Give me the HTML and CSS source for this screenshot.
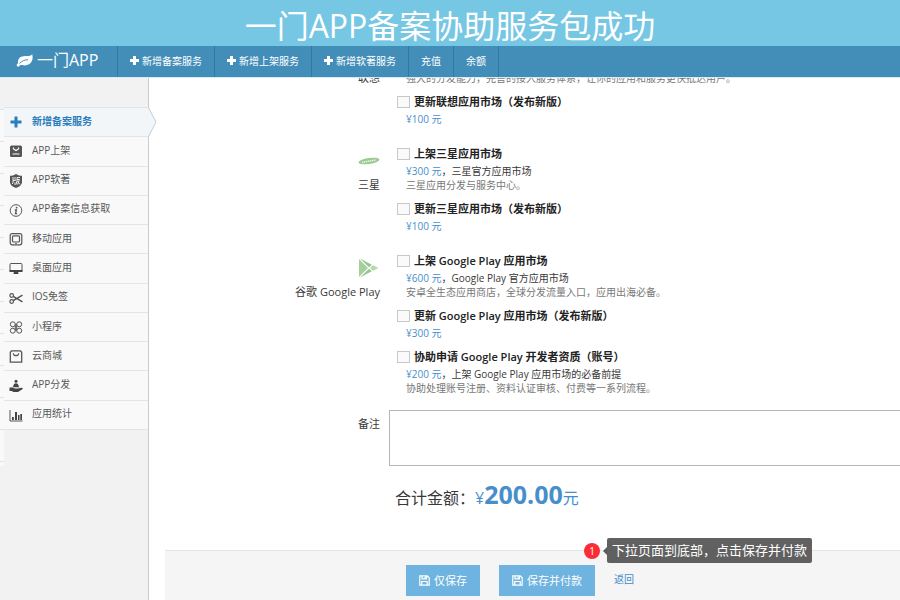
FILE: index.html
```html
<!DOCTYPE html>
<html lang="zh-CN">
<head>
<meta charset="utf-8">
<title>一门APP</title>
<link rel="stylesheet" href="styles.css">
</head>
<body>
<h1 class="banner">一门APP备案协助服务包成功</h1>
<header class="navbar">
  <a class="brand" href="#">
    <svg class="leaf" viewBox="0 0 17 13"><path fill="#fff" d="M16.2.3c.9 3.6.4 6.600-1.600 8.700-2.200 2.300-5.400 2.900-8.600 2.100-.9-.2-1.500-.3-2 .2-.5.600-1 1.400-1.700 1.400C1.400 12.700.5 11.700.6 11c.1-.8 1.300-1.300 1.500-2C1.600 6.300 2.700 4.300 4.700 3.100 7.900 1.200 13.900 3.200 16.200.3z"/><path fill="none" stroke="#438eb9" stroke-width="1" stroke-linecap="round" d="M3.800 9.200C6 6.900 8.300 5.900 11.700 5.700"/></svg>
    <span>一门APP</span>
  </a>
  <nav class="links">
    <a href="#"><svg class="plus" viewBox="0 0 9 9"><path d="M3 0h3v3h3v3H6v3H3V6H0V3h3z"/></svg>新增备案服务</a>
    <a href="#"><svg class="plus" viewBox="0 0 9 9"><path d="M3 0h3v3h3v3H6v3H3V6H0V3h3z"/></svg>新增上架服务</a>
    <a href="#"><svg class="plus" viewBox="0 0 9 9"><path d="M3 0h3v3h3v3H6v3H3V6H0V3h3z"/></svg>新增软著服务</a>
    <a href="#">充值</a>
    <a href="#">余额</a>
  </nav>
</header>
<div class="page">
  <aside class="sidebar">
    <ul class="menu">
      <li class="active"><a href="#"><svg viewBox="0 0 14 14"><path fill="#2b7dbc" d="M5.500 1.500h3v4h4v3h-4v4h-3v-4h-4v-3h4z"/></svg>新增备案服务</a>
        <svg class="arrow" viewBox="0 0 9 30"><path fill="#f2f6f9" d="M0 0 8 15 0 30z"/><path fill="none" stroke="#bccfda" d="M.5.5 8 15 .5 29.500"/></svg></li>
      <li><a href="#"><svg viewBox="0 0 14 14"><rect x="1" y="1.500" width="12" height="11.500" rx="1.500" fill="#555"/><path fill="none" stroke="#fff" stroke-width="1.200" d="M4.500 3.500v1.500L7 6.500 9.500 5V3.500M3.500 10h7"/></svg>APP上架</a></li>
      <li><a href="#"><svg viewBox="0 0 14 14"><path fill="#555" d="M7 0c2 1.300 4 1.800 6 1.800V8c0 3-3 5-6 6-3-1-6-3-6-6V1.800C3 1.800 5 1.300 7 0z"/><path fill="none" stroke="#fff" stroke-width=".9" d="M4 3v3.500h2.500M3 10l1-1V6.500M6 3v3.500M6 8.500V11M11 3.500H8V7L7 10.500M8 5.500h2.500L8.500 10.500M8.500 7l2.500 3.500"/></svg>APP软著</a></li>
      <li><a href="#"><svg viewBox="0 0 14 14"><circle cx="7" cy="7.500" r="5.800" fill="none" stroke="#555"/><circle cx="7.600" cy="4.700" r=".9" fill="#555"/><path fill="none" stroke="#555" stroke-width="1.300" d="M5.800 7h1.600l-.9 3.600h1.600"/></svg>APP备案信息获取</a></li>
      <li><a href="#"><svg viewBox="0 0 14 14" fill="none" stroke="#555" stroke-width="1.200"><rect x="1.200" y="1.600" width="11.600" height="11.200" rx="2"/><rect x="3.500" y="3.800" width="7" height="6.200" rx="1"/><path stroke-width=".8" d="M6 11.400h2"/></svg>移动应用</a></li>
      <li><a href="#"><svg viewBox="0 0 14 14"><rect x="1" y="2.500" width="12" height="8" rx="1" fill="none" stroke="#555"/><path fill="#444" d="M.5 9h13v2H9l.7 2H4.300L5 11H.5z"/></svg>桌面应用</a></li>
      <li><a href="#"><svg viewBox="0 0 14 14" fill="none" stroke="#555" stroke-width="1.200"><circle cx="2.700" cy="4.500" r="1.800"/><circle cx="2.700" cy="10.500" r="1.800"/><path stroke-width="1.500" d="M4.200 5.400 13.500 10.800M4.200 9.600 13.500 4.200"/></svg>IOS免签</a></li>
      <li><a href="#"><svg viewBox="0 0 14 14" fill="none" stroke="#555"><circle cx="3.800" cy="4.300" r="2.500"/><circle cx="10.200" cy="4.300" r="2.500"/><circle cx="3.800" cy="10.700" r="2.500"/><circle cx="10.200" cy="10.700" r="2.500"/><path d="M6.300 4.300v6.400M7.700 4.300v6.400"/></svg>小程序</a></li>
      <li><a href="#"><svg viewBox="0 0 14 14" fill="none" stroke="#555" stroke-width="1.300"><path d="M2.500 1.800h9l1.200 1.500v9.900H1.300V3.300zM4.300 4.300c.8 3.200 4.600 3.200 5.400 0"/></svg>云商城</a></li>
      <li><a href="#"><svg viewBox="0 0 14 14" fill="#444"><circle cx="7" cy="2.300" r="1.500"/><path d="M4.200 7.500c.2-4.500 5.400-4.500 5.600 0l1 .8H3.200zM.5 8.600h2.800l2.500 1h3l4-.8c1.200 0 1.300 1.200.2 1.700L9 13H4.500L2.700 12H.5z"/></svg>APP分发</a></li>
      <li><a href="#"><svg viewBox="0 0 14 14"><path fill="none" stroke="#555" d="M1 2v11h12.500"/><path fill="#444" d="M3 9h1.800v3H3zM6 4h2v8H6zM9 7h1.500v5H9zM11.300 6H13v6h-1.700z"/></svg>应用统计</a></li>
    </ul>
  </aside>
  <main class="main">
    <form class="form">
      <section class="group">
        <div class="market top">联想</div>
        <div class="items"><p class="desc">强大的分发能力，完善的接入服务体系，让你的应用和服务更快抵达用户。</p>
          <div class="item"><label><input type="checkbox">更新联想应用市场（发布新版）</label><p><b>¥100 元</b></p></div>
        </div>
      </section>
      <section class="group">
        <div class="market"><svg viewBox="0 0 22 20"><ellipse cx="11" cy="10" rx="10.600" ry="3" transform="rotate(-8 11 10)" fill="#9bcb92"/><path d="M4 11.400l14-2.500" stroke="#e8f4e5" stroke-width="1.500" stroke-dasharray="1.400 .6"/></svg>三星</div>
        <div class="items">
          <div class="item"><label><input type="checkbox">上架三星应用市场</label><p><b>¥300 元</b>，三星官方应用市场</p><p class="desc">三星应用分发与服务中心。</p></div>
          <div class="item"><label><input type="checkbox">更新三星应用市场（发布新版）</label><p><b>¥100 元</b></p></div>
        </div>
      </section>
      <section class="group">
        <div class="market"><svg viewBox="0 0 22 20"><path fill="#a5cf9c" d="M1 1v18l9-9z"/><path fill="#93c68a" d="M2 .5 11 9.300l2.800-2.600zM2 19.500l9-8.800 2.800 2.600z"/><path fill="#b4d9ac" d="M14.800 7.200 20.500 10l-5.700 2.800L12 10z"/></svg>谷歌 Google Play</div>
        <div class="items">
          <div class="item"><label><input type="checkbox">上架 Google Play 应用市场</label><p><b>¥600 元</b>，Google Play 官方应用市场</p><p class="desc">安卓全生态应用商店，全球分发流量入口，应用出海必备。</p></div>
          <div class="item"><label><input type="checkbox">更新 Google Play 应用市场（发布新版）</label><p><b>¥300 元</b></p></div>
          <div class="item"><label><input type="checkbox">协助申请 Google Play 开发者资质（账号）</label><p><b>¥200 元</b>，上架 Google Play 应用市场的必备前提</p><p class="desc">协助处理账号注册、资料认证审核、付费等一系列流程。</p></div>
        </div>
      </section>
      <div class="group remark"><label for="remark">备注</label><textarea id="remark"></textarea></div>
      <div class="total">合计金额：<span class="sum">¥<strong>200.00</strong>元</span></div>
      <div class="actions">
        <button type="button"><svg viewBox="0 0 11 11"><path fill="none" stroke="#fff" stroke-width="1.200" d="M.8.8h7.400l2 2v7.400H.8zM2.800 10V6.500h5.400V10M3 1v2.800h4.500V1"/><path fill="#fff" d="M5.500 1.500h1.300v2H5.500z"/></svg>仅保存</button>
        <button type="button"><svg viewBox="0 0 11 11"><path fill="none" stroke="#fff" stroke-width="1.200" d="M.8.8h7.400l2 2v7.400H.8zM2.800 10V6.500h5.400V10M3 1v2.800h4.500V1"/><path fill="#fff" d="M5.500 1.500h1.300v2H5.500z"/></svg>保存并付款</button>
        <a href="#">返回</a>
        <div class="guide"><span class="step">1</span><span class="bubble">下拉页面到底部，点击保存并付款</span></div>
      </div>
    </form>
  </main>
</div>
</body>
</html>
```

FILE: styles.css
```css
* {
  box-sizing: border-box;
}

body {
  margin: 0;
  min-height: 100vh;
  display: flex;
  flex-direction: column;
  font: 10px/14px "Open Sans", "Noto Sans CJK SC", sans-serif;
  color: #393939;
  background: #fff;
  overflow: hidden;
}

a {
  color: inherit;
  text-decoration: none;
}

p {
  margin: 0;
}

.banner {
  margin: 0;
  padding-top: 6px;
  font-size: 32px;
  line-height: 40px;
  font-weight: 400;
  text-align: center;
  color: #fff;
  background: #76c7e4;
}

/* Top navigation */
.navbar {
  display: flex;
  height: 31px;
  background: #438eb9;
  color: #fff;
}

.brand {
  display: flex;
  align-items: center;
  gap: 4px;
  width: 117px;
  padding: 0 0 3px 16px;
  font-size: 16px;
}

.leaf {
  width: 17px;
  height: 13px;
}

.links {
  display: flex;
  border-left: 1px solid #3278a1;
}

.links a {
  display: flex;
  align-items: center;
  gap: 3px;
  padding: 0 12px 2px;
  border-right: 1px solid #3278a1;
}

.plus {
  width: 9px;
  height: 9px;
  fill: #fff;
}

/* Sidebar */
.page {
  display: flex;
  flex: 1;
  border-top: 1px solid #d8ebf3;
}

.sidebar {
  flex: 0 0 149px;
  padding: 29px 0 0 4px;
  border-right: 1px solid #ccc;
  background: repeating-linear-gradient(#e2e2e2 0 1px, #f9f9f9 1px 32px) 0 31px / 4px 357px no-repeat #f2f2f2;
}

.menu {
  display: grid;
  grid-auto-rows: 1fr;
  height: 323px;
  margin: 0;
  padding: 0;
  list-style: none;
  border-top: 1px solid #e0e5e8;
}

.menu li {
  position: relative;
  display: flex;
  border-bottom: 1px solid #e5e5e5;
  background: #f9f9f9;
  color: #585858;
}

.menu a {
  display: flex;
  flex: 1;
  align-items: center;
  gap: 9px;
  padding: 0 0 3px 5px;
}

.menu a svg {
  width: 14px;
  height: 14px;
  margin-top: 3px;
}

.menu .active {
  background: #f2f6f9;
  color: #2b7dbc;
  font-weight: 700;
}

.arrow {
  position: absolute;
  top: -1px;
  left: 100%;
  width: 9px;
  height: 30px;
}

/* Order form */
.main {
  flex: 1;
  min-width: 0;
  padding-left: 16px;
  overflow: hidden;
}

.form {
  margin-top: -7px;
}

.group {
  display: grid;
  grid-template-columns: 215px 1fr;
  column-gap: 9px;
  margin-bottom: 18px;
}

.market {
  display: flex;
  flex-direction: column;
  align-items: flex-end;
  gap: 4px;
  padding-top: 7px;
  font-size: 11px;
  line-height: 20px;
}

.market.top {
  padding-top: 0;
  line-height: 14px;
}

.market svg {
  width: 22px;
  height: 20px;
}

.items {
  display: grid;
  gap: 7px;
  padding-left: 8px;
}

.item label {
  display: flex;
  align-items: center;
  gap: 4px;
  font-size: 11px;
  line-height: 20px;
  font-weight: 600;
  color: #222;
}

.item input {
  appearance: none;
  width: 13px;
  height: 12px;
  margin: 0;
  border: 1px solid #c8c8c8;
  background: #fafafa;
}

.items p {
  padding-left: 9px;
}

.items b {
  font-weight: 400;
  color: #478fca;
}

.items .desc {
  color: #777;
}

.remark {
  margin: -3px 0 12px;
}

.remark label {
  padding-top: 4px;
  font-size: 11px;
  line-height: 20px;
  text-align: right;
}

.remark textarea {
  width: 100%;
  height: 56px;
  border: 1px solid #b5b5b5;
  border-right: 0;
  resize: none;
}

.total {
  padding-left: 230px;
  font-size: 16px;
  line-height: 32px;
}

.sum {
  color: #478fca;
}

.sum strong {
  font-size: 25px;
  font-weight: 700;
}

.actions {
  position: relative;
  display: flex;
  align-items: flex-start;
  gap: 19px;
  margin-top: 36px;
  padding: 14px 0 20px 241px;
  border-top: 1px solid #e5e5e5;
  background: #f5f5f5;
}

.actions button {
  display: flex;
  align-items: center;
  gap: 4px;
  height: 31px;
  padding: 0 13px;
  border: 0;
  background: #6fb3e0;
  color: #fff;
  font: 11px/20px "Open Sans", "Noto Sans CJK SC", sans-serif;
}

.actions button svg {
  width: 11px;
  height: 11px;
}

.actions a {
  line-height: 28px;
  color: #428bca;
}

/* Step callout */
.guide {
  position: absolute;
  top: -13px;
  left: 419px;
  display: flex;
  align-items: center;
  gap: 7px;
}

.step {
  width: 16px;
  border-radius: 8px;
  background: #fb2c36;
  color: #fff;
  line-height: 16px;
  text-align: center;
}

.bubble {
  position: relative;
  padding: 0 5px;
  border-radius: 2px;
  background: rgba(75, 75, 75, 0.88);
  color: #fff;
  font-size: 13px;
  line-height: 25px;
  white-space: nowrap;
}

.bubble::before {
  content: "";
  position: absolute;
  top: 9px;
  right: 100%;
  border: solid transparent;
  border-width: 4px 4px 4px 0;
  border-right-color: #5a5a5a;
}
```
